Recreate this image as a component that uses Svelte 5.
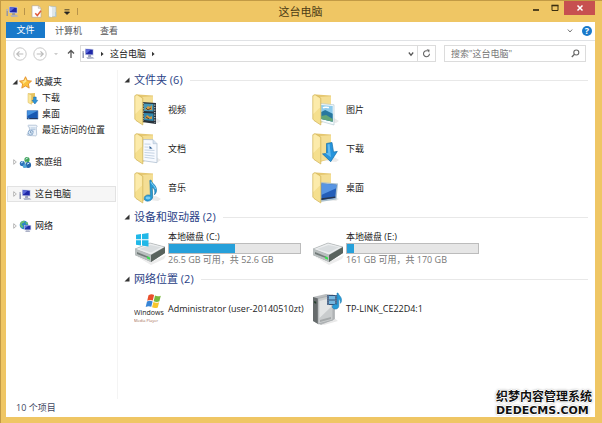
<script>
  const places = [
    { label: '下载', icon: 'download' },
    { label: '桌面', icon: 'screen' },
    { label: '最近访问的位置', icon: 'recent' }
  ];
  const groups = [
    { label: '家庭组', icon: 'home' },
    { label: '这台电脑', icon: 'pc', active: true },
    { label: '网络', icon: 'network' }
  ];
  const folders = [
    { label: '视频', kind: 'video' },
    { label: '图片', kind: 'picture' },
    { label: '文档', kind: 'document' },
    { label: '下载', kind: 'download' },
    { label: '音乐', kind: 'music' },
    { label: '桌面', kind: 'desktop' }
  ];
  const drives = [
    { label: '本地磁盘 (C:)', used: 50, note: '26.5 GB 可用，共 52.6 GB', system: true },
    { label: '本地磁盘 (E:)', used: 5, note: '161 GB 可用，共 170 GB', system: false }
  ];
  const locations = [
    { label: 'Administrator (user-20140510zt)', kind: 'wmp' },
    { label: 'TP-LINK_CE22D4:1', kind: 'server' }
  ];
</script>

{#snippet small(kind)}
  <svg class="small" viewBox="0 0 13 13" aria-hidden="true">
    {#if kind === 'pc'}
      <path d="M1.2 4v7" stroke="#8d93ad" stroke-width="1.4" />
      <path d="M.6 5h1.3" stroke="#e8ecf6" stroke-width=".8" />
      <path d="M3 1.5l8.5.5v6.4L3 8z" fill="#c5cbe4" />
      <path d="M3.8 2.3l7 .4v4.9l-7-.4z" fill="#1f27a8" />
      <path d="M3.8 2.3l5 .3-4 3.6-1-.1z" fill="#5a68d8" />
      <path d="M6.3 8.3h2.6l.3 1.4H6z" fill="#8288a6" />
      <path d="M4.2 10.2l6.5-.2 1.8 1.6-7 .3z" fill="#a9afc6" />
    {:else if kind === 'star'}
      <path d="M6.5.7l1.8 3.9 4.2.5-3.1 2.8.8 4.2-3.7-2.1-3.7 2.1.8-4.2L.5 5.1l4.2-.5z" fill="#fbc13c" stroke="#df8522" stroke-width=".8" stroke-linejoin="round" />
      <path d="M6.5 2.2l1.1 3-3.8 3 .6-2.4L2 5.6l3.2-.5z" fill="#ffe792" />
    {:else if kind === 'download'}
      <path d="M2 1.5L9 1v9l-5 2z" fill="#e6c35f" />
      <path d="M2 1.5l3.6 1.4v9.4L2 10.5z" fill="#fae79a" stroke="#d9b758" stroke-width=".5" />
      <path d="M7.6 5h2.6v3.3h1.6L8.9 12 6 8.3h1.6z" fill="#2c94d8" stroke="#1767a8" stroke-width=".5" />
    {:else if kind === 'screen'}
      <path d="M1 2.5h11v8.6H1z" fill="#1758b2" stroke="#7e9cc5" stroke-width=".6" />
      <path d="M1.3 2.8h10.4L1.3 8z" fill="#4491df" />
      <path d="M1.3 10h10.4v1H1.3z" fill="#24375d" />
      <path d="M2 10.4h1.3" stroke="#7cc4f4" stroke-width=".7" />
    {:else if kind === 'recent'}
      <path d="M2.5 1.2h7.4c1.4 0 1.7 2 .3 2l.5 7.2c0 1.5-1.6 1.8-2.2 1.4L2 11.5c-1.3-.2-1.3-2 .2-2L4 9.3 3.2 3C1.8 2.8 1.5 1.5 2.5 1.2z" fill="#eef4fb" stroke="#93aac5" stroke-width=".6" />
      <path d="M4.5 4h4.8M4.7 5.6h4.7M4.9 7.2h3" stroke="#88a8cb" stroke-width=".6" />
      <circle cx="4.6" cy="8.6" r="2.5" fill="#d7e6f5" stroke="#6f94bd" stroke-width=".7" />
      <path d="M4.6 7.1v1.6l1.2.5" fill="none" stroke="#476a93" stroke-width=".6" />
    {:else if kind === 'home'}
      <circle cx="3.4" cy="7.5" r="2.6" fill="#2d72bb" />
      <circle cx="8" cy="3.7" r="2.6" fill="#42a358" />
      <circle cx="9.2" cy="9" r="2.9" fill="#2566ac" />
      <circle cx="5.7" cy="10.2" r="1.9" fill="#4ea3d6" />
      <path d="M2.4 6.8l1.3-.9M7 3l1.4-.8M8.3 8l1.6-.7" stroke="#d2f0ff" stroke-linecap="round" />
      <path d="M5.5 7l2-1.5" stroke="#a7d8ad" />
    {:else if kind === 'network'}
      <circle cx="5" cy="5" r="4.3" fill="#2b86c6" />
      <path d="M2 2c1.2-1.2 3-1.4 4-.8L4.6 3 3.2 3.3 2.5 5l1.7 1-.7 2C1.2 7 .1 4.2 2 2zM6.5 2.1l2 .2.7 2-2 .2z" fill="#68bd71" />
      <path d="M5.2 5h7v5.2h-7z" fill="#c5cbe4" />
      <path d="M5.9 5.7h5.6v3.8H5.9z" fill="#1f2fa8" />
      <path d="M5.9 5.7h3.6L5.9 8.5z" fill="#5a76dc" />
      <path d="M7 10.4h3.4l.8 1.4H6.2z" fill="#9299b4" />
    {/if}
  </svg>
{/snippet}

{#snippet folder(kind)}
  <svg class="large" viewBox="0 0 28 34" aria-hidden="true">
    <path d="M6 28l18 2 3-2-5-3z" fill="#ebebeb" />
    <path d="M4 1.5L19 2.5v24L8 30z" fill="#e5c770" />
    <path d="M8 4l11-.7V27L8 29z" fill="#f4de94" />
    {#if kind === 'video'}
      <path d="M8 9l14 1v21L8 29z" fill="#29323a" />
      <path d="M10 10.5l9.5.6v7.4L10 18z" fill="#4898b7" />
      <path d="M10 20l9.5.5V28l-9.5-1z" fill="#3189af" />
      <path d="M11 16l3-3 2 1 2-2v5l-7-.4zM11 25l2-3 3 2 2-1v3l-7-.5z" fill="#d39a42" />
      <path d="M12 15l2 2 3-2M12 24l3 2" stroke="#563d2b" fill="none" />
      <path d="M9.1 10v18M20.8 11.5v18" stroke="#e9eff2" stroke-width="1" stroke-dasharray="1.2 1.3" />
    {:else if kind === 'picture'}
      <path d="M8 10.5l14 1.3V32L8 28z" fill="#f5fbfd" stroke="#adc2cd" stroke-width=".6" />
      <path d="M9.2 12l11.5 1v15.7L9.2 26z" fill="#8dcbec" />
      <path d="M9.2 19l4-2 7.5 3.7v8L9.2 26z" fill="#28779f" />
      <path d="M9.2 23l5-1 6.5 4v2.7L9.2 26z" fill="#62a576" />
      <path d="M11 15c2-2 4 0 6-.5" stroke="#fff" fill="none" stroke-width="1.5" />
    {:else if kind === 'document'}
      <path d="M9 7.5l10 .2 4 4v19L8 28.5z" fill="#f7faff" stroke="#a8b9cc" stroke-width=".7" />
      <path d="M19 7.7v4h4" fill="#d6e3f1" stroke="#a8b9cc" stroke-width=".5" />
      <path d="M10.5 12l6 .2M10.5 15l4 .2M10.5 18l10 .4M10.5 20.5l10 .7M10.5 23l10 1.1M10.5 25.3l10 1.3" stroke="#b8c9dc" stroke-width=".8" />
      <path d="M15.5 14l3 2.4-3 .4z" fill="#295a91" />
    {:else if kind === 'download'}
      <path d="M14.5 11.5l5.5-1 1.5 9.5 3.8-.6-6.6 10.3-8.2-7.8 4-.5z" fill="#2694dc" stroke="#1671ac" stroke-width=".7" />
      <path d="M15.6 12.4l2-.3 1.4 13.2-5.8-4 3-.4z" fill="#78c8f5" opacity=".75" />
    {:else if kind === 'music'}
      <path d="M17 9c1 4 6 5 5.5 11-.2 1.6-1.1 3-2 3.8.8-3.7.2-6.1-2.3-7.5l.5 9.2c0 5.6-8.5 6-8.5 2 0-3 3.2-4.3 6.2-3.2L15.8 9.4z" fill="#2a9bd5" stroke="#1b75ad" stroke-width=".6" />
      <ellipse cx="14" cy="27" rx="2.5" ry="1.4" fill="#79cef4" />
      <path d="M17 11c1 3 4 4 4.5 7" fill="none" stroke="#85d3f6" />
    {:else}
      <path d="M8 11l18 1.5-1.5 16L8 31z" fill="#a9bfcd" />
      <path d="M9.3 12.5l15.2 1.2-1.2 13.2-14 2.1z" fill="#235eb9" />
      <path d="M9.3 12.5l15.2 1.2-.3 3.5L9.3 24z" fill="#5795e3" />
      <path d="M9.3 27.3l14-1.8v1.3l-14 2.2z" fill="#26364e" />
    {/if}
    <path d="M.8 2.7L3 1.5l5.8 3.6V32L2 27.5.8 26z" fill="#f5df8e" stroke="#d0b257" stroke-width=".7" />
    <path d="M1.4 3.5L3 2.5l4.9 3.1v9L1.4 21z" fill="#fff0b8" opacity=".7" />
  </svg>
{/snippet}

{#snippet drive(system)}
  <svg class="large" viewBox="0 0 34 34" aria-hidden="true">
    <path d="M2 25l15 6 15-7-2 4-13 6z" fill="#ececec" />
    <path d="M1 18l15-6 15 4v6l-14 9L1 24z" fill="#8c9392" />
    <path d="M1 18l15-6 15 4-14 8z" fill="#eceeef" stroke="#b3b7b9" stroke-width=".7" />
    <path d="M5 18l11.5-4L27 16.3 17 21.5z" fill="#d9dddf" />
    <path d="M1 18l16 6v7L1 24z" fill="#b9bfbf" />
    <path d="M17 24l14-8v6l-14 9z" fill="#59635e" />
    <path d="M3 21l12 5v1.6L3 23z" fill="#727b79" />
    <path d="M13 25.2l3 1.2v2.3l-3-1.2z" fill="#3adc50" />
    {#if system}
      <path d="M2 3.8l5-.7v5.2H2zM8 3l6.5-1v6.3H8zM2 9.3h5v5.2l-5-.7zM8 9.3h6.5v6.3L8 14.6z" fill="#20b8e8" />
    {/if}
  </svg>
{/snippet}

{#snippet location(kind)}
  <svg class="large" viewBox="0 0 34 34" aria-hidden="true">
    {#if kind === 'wmp'}
      <path d="M14.5 3.2c2-1.2 4-1.1 5.6-.2l-1.3 5.6c-1.8-.9-3.5-.9-5.6.1z" fill="#e9502c" />
      <path d="M21 3.6c2 1 3.7 1 5.8.1l-1.4 5.6c-2 1-3.8.8-5.7-.1z" fill="#79b93c" />
      <path d="M13 9.6c2-1 3.8-1 5.6-.1l-1.3 5.3c-1.8-.9-3.6-.9-5.6.1z" fill="#3785d6" />
      <path d="M19.4 10.1c2 1 3.8 1 5.7.1l-1.3 5.2c-2 1-3.8.9-5.7-.1z" fill="#f7c62d" />
      <text x="0" y="23" font-size="7" fill="#222">Windows</text>
      <text x="0" y="30" font-size="4" fill="#a36b55">Media Player</text>
    {:else}
      <path d="M4 29l8 4 14-4-4-3z" fill="#e9e9e9" />
      <path d="M1 5l13-3 9 1v24L9 33l-8-4z" fill="#b9bcbe" />
      <path d="M1 5l5 1.5V32l-5-3z" fill="#666b6c" />
      <path d="M6 6.5L21 3v25L6 32z" fill="#c9cccd" stroke="#9a9fa1" stroke-width=".6" />
      <path d="M7.5 9L19 6v9L7.5 26z" fill="#e3e5e5" />
      <path d="M2.2 9l2 .7v2l-2-.7z" fill="#243c2b" />
      <path d="M8 28l11-3v2L8 30z" fill="#a5a9aa" />
      <path d="M15 3h10v10H15z" fill="#315078" />
      <path d="M17 4h6v3.5h-6zM17 8.5h6V12h-6z" fill="#76b7df" />
      <path d="M16 3.6v9M24 3.6v9" stroke="#eef4f8" stroke-width=".8" stroke-dasharray="1 1" />
      <path d="M26 1c1 3 4.5 4 3.3 9l-1 1.4c.2-2.6-.4-3.7-1.5-4.3V14c0 4-6.5 4-6.5.7 0-2 2.5-3 4.7-2.2V1z" fill="#289bd6" stroke="#1c76ac" stroke-width=".5" />
    {/if}
  </svg>
{/snippet}

{#snippet heading(text)}
  <h2>
    <svg class="fold" viewBox="0 0 6 6" aria-hidden="true"><path d="M5.5.5v5h-5z" fill="#333" /></svg>
    <span>{text}</span>
  </h2>
{/snippet}

<div class="window">
  <header class="title">
    <div class="quick">
      {@render small('pc')}
      <i></i>
      <button aria-label="属性">
        <svg class="small" viewBox="0 0 13 13"><path d="M2 .7h6.3L11 3.3v9H2z" fill="#fff" stroke="#b8a892" stroke-width=".7" /><path d="M8.3.7v2.6H11" fill="#ddd" stroke="#b8a892" stroke-width=".5" /><path d="M5.3 8.3l2 2.2 3.7-4.7" fill="none" stroke="#df5c3c" stroke-width="1.5" /></svg>
      </button>
      <button aria-label="新建文件夹">
        <svg class="small" viewBox="0 0 13 13"><path d="M3 1l7 .7v9.8l-7 .7z" fill="#dde6e9" stroke="#a9b7b6" stroke-width=".6" /><path d="M3 1l3 1.5v9.7l-3-1z" fill="#f5fafc" /><path d="M9.7 7v4.8" stroke="#abc9d9" /></svg>
      </button>
      <button class="tiny" aria-label="自定义">
        <svg viewBox="0 0 6 6" width="6" height="6"><path d="M.5.8h5M.5 3h5L3 5.5z" stroke="#222" stroke-width=".8" fill="#222" /></svg>
      </button>
      <i></i>
    </div>
    <h1>这台电脑</h1>
    <div class="controls">
      <button aria-label="最小化"><svg viewBox="0 0 8 8"><path d="M1 6h6" stroke="#2d240e" stroke-width="1.6" /></svg></button>
      <button aria-label="最大化"><svg viewBox="0 0 8 8"><path d="M1 1.5h6v5H1z" fill="none" stroke="#3b2e10" /><path d="M.5 1.5h7" stroke="#3b2e10" stroke-width="1.6" /></svg></button>
      <button class="close" aria-label="关闭"><svg viewBox="0 0 8 8"><path d="M1.5 1.5l5 5M6.5 1.5l-5 5" stroke="#fff" stroke-width="1.5" /></svg></button>
    </div>
  </header>

  <div class="client">
    <div class="ribbon">
      <button class="file">文件</button>
      <button>计算机</button>
      <button>查看</button>
      <div class="help">
        <button aria-label="展开功能区"><svg width="6" height="6" viewBox="0 0 6 6"><path d="M.8 1.5L3 4l2.2-2.5" fill="none" stroke="#777" /></svg></button>
        <button class="question" aria-label="帮助">?</button>
      </div>
    </div>

    <div class="toolbar">
      <div class="arrows">
        <button aria-label="后退"><svg width="14" height="14" viewBox="0 0 14 14"><circle cx="7" cy="7" r="6.2" fill="none" stroke="#c8c8c8" /><path d="M10.3 7H4M6.5 4.3L3.8 7l2.7 2.7" fill="none" stroke="#bbb" stroke-width="1.2" /></svg></button>
        <button aria-label="前进"><svg width="14" height="14" viewBox="0 0 14 14"><circle cx="7" cy="7" r="6.2" fill="none" stroke="#c8c8c8" /><path d="M3.7 7H10M7.5 4.3L10.2 7 7.5 9.7" fill="none" stroke="#bbb" stroke-width="1.2" /></svg></button>
        <button class="past" aria-label="最近位置"><svg width="6" height="6" viewBox="0 0 6 6"><path d="M1 2h4L3 4.3z" fill="#ccc" /></svg></button>
        <button aria-label="上移"><svg width="8" height="10" viewBox="0 0 8 10"><path d="M4 9V1.5M1 4.5l3-3 3 3" fill="none" stroke="#555" stroke-width="1.3" /></svg></button>
      </div>
      <div class="address">
        {@render small('pc')}
        <svg width="5" height="6" viewBox="0 0 5 6"><path d="M1 .8L3.6 3 1 5.2z" fill="#333" /></svg>
        <span>这台电脑</span>
        <svg width="5" height="6" viewBox="0 0 5 6"><path d="M1 .8L3.6 3 1 5.2z" fill="#333" /></svg>
        <div class="ends">
          <button class="drop" aria-label="历史"><svg width="6" height="6" viewBox="0 0 6 6"><path d="M.8 1.5L3 4.2l2.2-2.7" fill="none" stroke="#555" stroke-width="1.2" /></svg></button>
          <button class="refresh" aria-label="刷新"><svg width="9" height="9" viewBox="0 0 9 9"><path d="M7.5 4.8A3 3 0 1 1 5.6 1.9" fill="none" stroke="#666" stroke-width="1.1" /><path d="M4.6.3l3 .5-.5 3z" fill="#666" /></svg></button>
        </div>
      </div>
      <div class="search">
        <input aria-label="搜索" placeholder={'搜索"这台电脑"'} />
        <svg width="9" height="9" viewBox="0 0 9 9"><circle cx="5.3" cy="3.5" r="2.5" fill="none" stroke="#666" stroke-width="1.1" /><path d="M3.5 5.3L.8 8" stroke="#666" stroke-width="1.3" /></svg>
      </div>
    </div>

    <div class="body">
      <nav>
        <a class="row" href="#favorites">
          <svg class="fold" viewBox="0 0 6 6"><path d="M5.5.5v5h-5z" fill="#333" /></svg>
          {@render small('star')}<span>收藏夹</span>
        </a>
        {#each places as place}
          <a class="row child" href="#place">{@render small(place.icon)}<span>{place.label}</span></a>
        {/each}
        {#each groups as group}
          <a class="row group" class:active={group.active} href="#group">
            <svg class="fold" viewBox="0 0 6 6"><path d="M1.7.7L4.3 3 1.7 5.3z" fill="#fff" stroke="#999" stroke-width=".7" /></svg>
            {@render small(group.icon)}<span>{group.label}</span>
          </a>
        {/each}
      </nav>

      <main>
        <section>
          {@render heading('文件夹 (6)')}
          <div class="grid">
            {#each folders as item}
              <a class="item" href="#folder"><span class="pic">{@render folder(item.kind)}</span><span>{item.label}</span></a>
            {/each}
          </div>
        </section>
        <section>
          {@render heading('设备和驱动器 (2)')}
          <div class="grid">
            {#each drives as item}
              <a class="item disk" href="#drive">
                <span class="pic">{@render drive(item.system)}</span>
                <span class="info">
                  <span>{item.label}</span>
                  <span class="bar"><span class="used" style="width: {item.used}%"></span></span>
                  <span class="note">{item.note}</span>
                </span>
              </a>
            {/each}
          </div>
        </section>
        <section>
          {@render heading('网络位置 (2)')}
          <div class="grid">
            {#each locations as item}
              <a class="item net" href="#location"><span class="pic">{@render location(item.kind)}</span><span>{item.label}</span></a>
            {/each}
          </div>
        </section>
      </main>
    </div>
    <footer>10 个项目</footer>
  </div>
  <div class="mark"><span>织梦内容管理系统</span><b>DEDECMS.COM</b></div>
</div>

<style>
  :global(body) { margin: 0; background: #fff; }
  .window {
    position: relative;
    box-sizing: border-box;
    display: flex;
    flex-direction: column;
    min-height: 100vh;
    padding: 0 7px 6px 5px;
    border: 1px solid #c29a45;
    border-width: 1px 0 0 1px;
    background: #efc664;
    color: #222;
    font: 9px/12px "Open Sans", "Noto Sans CJK SC", sans-serif;
  }
  svg { display: block; flex: none; }
  .small { width: 13px; height: 13px; }
  .fold { width: 6px; height: 6px; }
  a { color: inherit; text-decoration: none; }
  button {
    display: flex;
    align-items: center;
    justify-content: center;
    margin: 0;
    padding: 0;
    border: 0;
    background: none;
    color: #555;
    font: inherit;
  }
  .title { display: flex; height: 21px; }
  .quick { display: flex; flex: 1; align-items: center; gap: 3px; }
  .quick i { width: 1px; height: 7px; margin: 0 2px; background: #b7934a; }
  .quick .tiny { width: 10px; }
  h1 { margin: 0; color: #4b3b15; font: 11px/21px "Open Sans", "Noto Sans CJK SC", sans-serif; }
  .controls { display: flex; flex: 1; justify-content: flex-end; align-items: flex-start; }
  .controls button { width: 19px; height: 14px; }
  .controls svg { width: 8px; height: 8px; }
  .controls .close { width: 31px; background: #c75050; }
  .client { display: flex; flex: 1; flex-direction: column; background: #fff; }
  .ribbon { display: flex; height: 18px; border-bottom: 1px solid #e0e2e5; }
  .ribbon button { align-items: flex-start; padding: 3px 9px; }
  .ribbon .file { width: 39px; height: 16px; margin-right: 1px; padding: 2px 0; background: #1979ca; color: #fff; }
  .ribbon .help { display: flex; align-items: center; gap: 9px; margin-left: auto; padding-right: 3px; }
  .help button { padding: 0; }
  .ribbon .question { align-items: center; width: 10px; height: 10px; border-radius: 50%; background: #1979ca; color: #fff; font-weight: bold; line-height: 10px; }
  .toolbar { display: flex; align-items: flex-start; gap: 8px; padding: 4px 9px 8px 7px; }
  .arrows { display: flex; align-items: center; gap: 6px; height: 17px; }
  .past { margin: 0 2px 0 0; }
  .address, .search { display: flex; box-sizing: border-box; height: 17px; border: 1px solid #dcdcdc; align-items: center; }
  .address { flex: 1; gap: 5px; padding-left: 1px; margin-left: -3px; }
  .ends { display: flex; margin-left: auto; }
  .address .drop { width: 12px; height: 15px; }
  .address .refresh { width: 18px; height: 15px; border-left: 1px solid #dcdcdc; }
  .search { width: 142px; padding: 0 5px 0 6px; }
  input { flex: 1; min-width: 0; padding: 0; border: 0; outline: 0; background: none; font: inherit; }
  input::placeholder { color: #777; opacity: 1; }
  .body { display: flex; flex: 1; }
  nav { box-sizing: border-box; width: 112px; padding: 4px 1px 0; border-right: 1px solid #f4f4f4; }
  .row { display: flex; box-sizing: border-box; align-items: center; height: 16px; padding-left: 5px; white-space: nowrap; }
  .row .fold { margin-right: 1px; }
  .row span { margin-left: 3px; }
  .child { padding-left: 19px; }
  .group { margin-top: 16px; }
  .active { border: 1px solid #e2e2e2; padding-left: 4px; background: #f6f6f6; }
  main { flex: 1; padding: 0 7px 0 6px; }
  h2 { display: flex; align-items: center; gap: 4px; height: 20px; margin: 0; color: #2a3f86; font: 11px/20px "Open Sans", "Noto Sans CJK SC", sans-serif; }
  h2::after { flex: 1; height: 1px; margin-left: 3px; background: #e8e8e8; content: ""; }
  .grid { display: grid; grid-template-columns: 178px 178px; padding-left: 10px; }
  .item { display: flex; align-items: center; height: 39px; white-space: nowrap; }
  .disk { height: 42px; }
  .pic { width: 34px; }
  .large { height: 34px; width: 28px; }
  .disk .large, .net .large { width: 34px; }
  .info { display: flex; flex-direction: column; }
  .bar { box-sizing: border-box; width: 133px; height: 11px; border: 1px solid #bcbcbc; background: #e6e6e6; }
  .used { display: block; height: 100%; background: #26a0da; }
  .note { color: #777; }
  footer { height: 18px; padding-left: 10px; color: #3c4661; line-height: 18px; }
  .mark {
    position: absolute;
    right: 10px;
    bottom: 6px;
    color: #111;
    text-shadow: 1px 0 #fff, -1px 0 #fff, 0 1px #fff, 0 -1px #fff, 0 0 2px #777, 0 0 3px #999;
    font: bold 12px/16px "Noto Sans CJK SC", sans-serif;
  }
  .mark span, .mark b { display: block; }
  .mark b { font: bold 11px/13px "DejaVu Sans", sans-serif; }
</style>
